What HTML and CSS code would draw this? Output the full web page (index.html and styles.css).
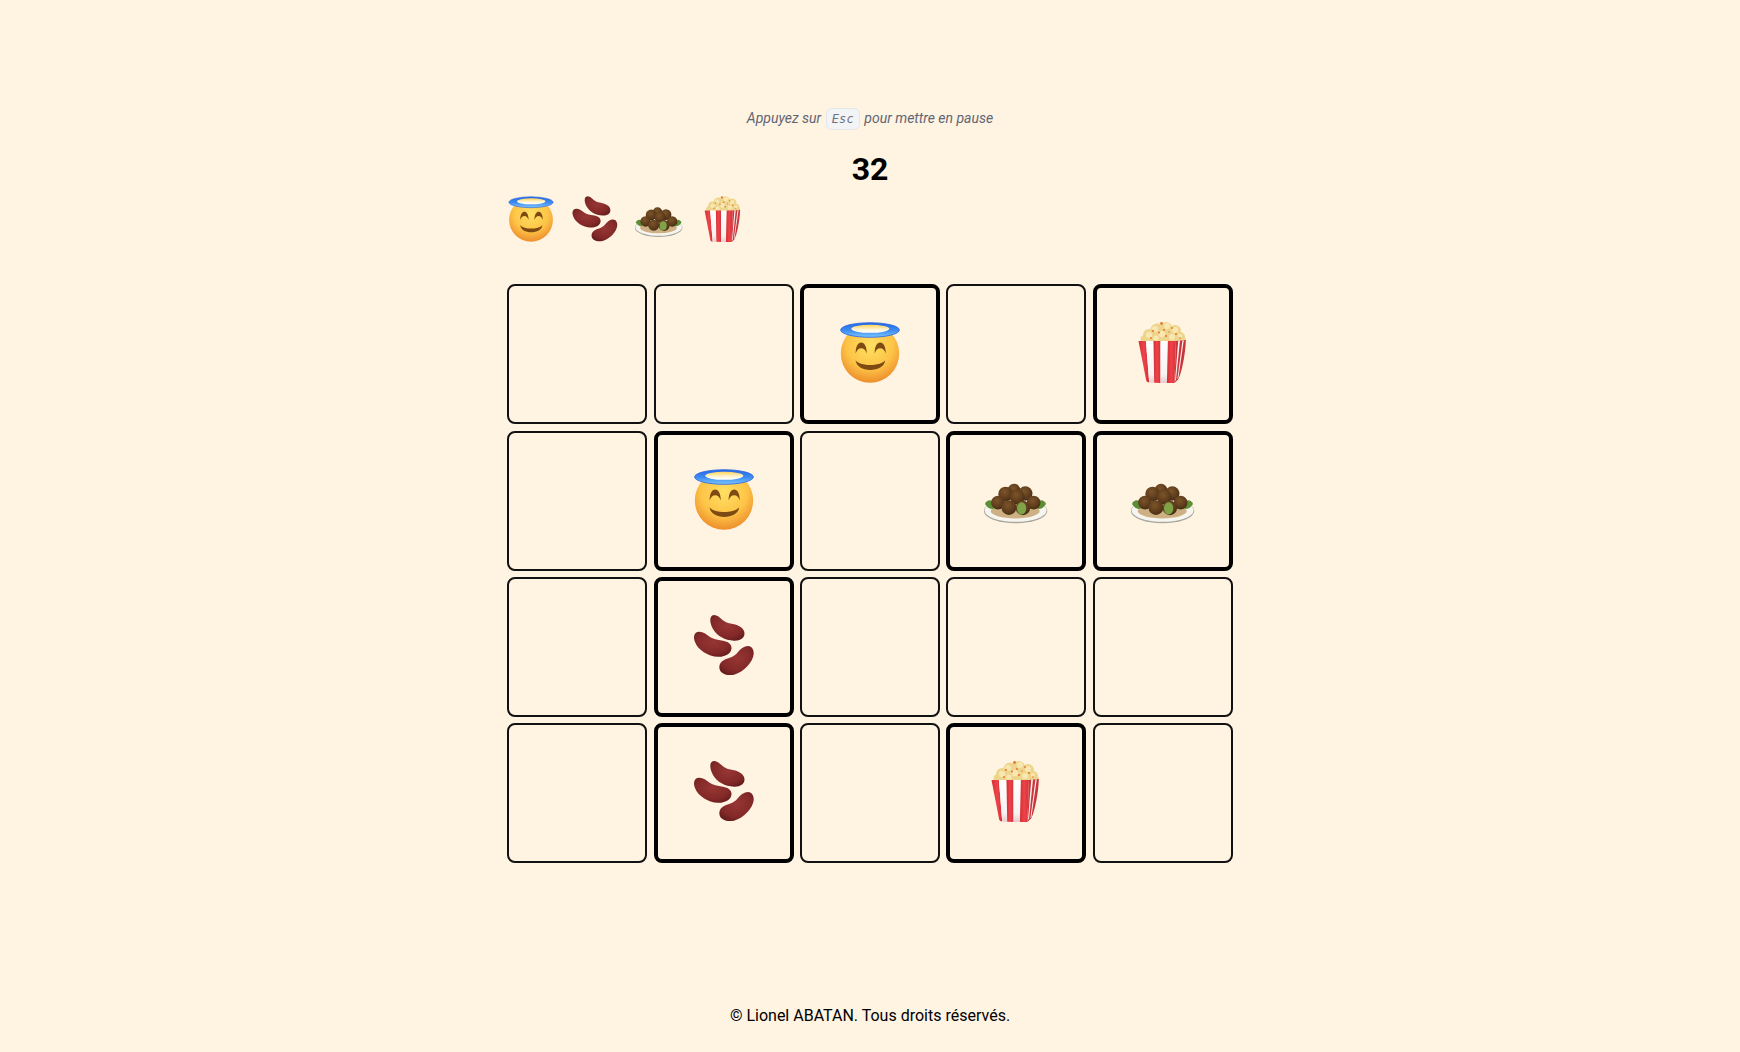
FILE: index.html
```html
<!DOCTYPE html>
<html lang="fr">
<head>
<meta charset="utf-8">
<title>Jeu de mémoire</title>
<link rel="stylesheet" href="styles.css">
</head>
<body>
<svg class="sprite" aria-hidden="true" xmlns="http://www.w3.org/2000/svg">
  <defs>
    <radialGradient id="face" cx="0.5" cy="0.36" r="0.66">
      <stop offset="0" stop-color="#ffdf62"/>
      <stop offset="0.6" stop-color="#fdc447"/>
      <stop offset="1" stop-color="#ec8a2a"/>
    </radialGradient>
    <linearGradient id="haloGrad" x1="0" y1="0" x2="0" y2="1">
      <stop offset="0" stop-color="#2467e6"/>
      <stop offset="0.55" stop-color="#3f8df2"/>
      <stop offset="1" stop-color="#7cc6fb"/>
    </linearGradient>
    <linearGradient id="haloIn" x1="0" y1="0" x2="0" y2="1">
      <stop offset="0" stop-color="#ffd35a"/>
      <stop offset="0.6" stop-color="#fff6d8"/>
      <stop offset="1" stop-color="#ffffff"/>
    </linearGradient>
    <radialGradient id="bean" cx="0.5" cy="0.4" r="0.65">
      <stop offset="0" stop-color="#973634"/>
      <stop offset="0.7" stop-color="#822928"/>
      <stop offset="1" stop-color="#641c1c"/>
    </radialGradient>
    <radialGradient id="ball" cx="0.42" cy="0.35" r="0.7">
      <stop offset="0" stop-color="#7d5429"/>
      <stop offset="0.7" stop-color="#5a3a1b"/>
      <stop offset="1" stop-color="#3d2610"/>
    </radialGradient>
    <linearGradient id="red" x1="0" y1="0" x2="1" y2="0">
      <stop offset="0" stop-color="#d62f36"/>
      <stop offset="0.5" stop-color="#ee4249"/>
      <stop offset="1" stop-color="#d3323a"/>
    </linearGradient>
    <linearGradient id="whiteStripe" x1="0" y1="0" x2="0" y2="1">
      <stop offset="0" stop-color="#ffffff"/>
      <stop offset="0.8" stop-color="#f7f2f0"/>
      <stop offset="1" stop-color="#e9c9cc"/>
    </linearGradient>
    <symbol id="halo" viewBox="0 0 64 64">
      <circle cx="32" cy="34.5" r="29.2" fill="url(#face)"/>
      <ellipse cx="32" cy="11" rx="29.4" ry="7.3" fill="url(#haloGrad)" stroke="#2a63e0" stroke-width="0.8"/>
      <ellipse cx="32.3" cy="9.8" rx="19" ry="4" fill="url(#haloIn)"/>
      <path d="M17.6 34.5C17.8 27 20 23.5 23.2 23.5C26.4 23.5 28.6 27 28.8 34.5C27.5 30.8 25.8 29.2 23.2 29.2C20.6 29.2 18.9 30.8 17.6 34.5Z" fill="#7c4a12"/>
      <path d="M36.6 34.5C36.8 27 39 23.5 42.2 23.5C45.4 23.5 47.6 27 47.8 34.5C46.5 30.8 44.8 29.2 42.2 29.2C39.6 29.2 37.9 30.8 36.6 34.5Z" fill="#7c4a12"/>
      <path d="M17.5 41.5C23 47.5 41.5 47.5 47.2 41.5C46.5 47.2 40 51 32.2 51C24.5 51 18.5 47.2 17.5 41.5Z" fill="#7c4a12"/>
    </symbol>
    <symbol id="beans" viewBox="0 0 64 64">
      <path d="M22 3C26 3 29 7 32 9C35 11 37 11 41 12C47 13.5 52.5 16 52.5 21.5C52.5 26 48 29 42 28.7C33 28.3 25 24 21 17C18 12 16.5 3.5 22 3Z" fill="url(#bean)"/>
      <path d="M7 19.7C11 19.5 14 22 18 25C21 27 25 28 31 28.7C36 29.5 39.5 32 39.5 36C39.5 41 34 45 26 44.8C16 44.5 6 38 3 30C1 25 2 20 7 19.7Z" fill="url(#bean)"/>
      <path d="M56 34C60 34 62 38 61.7 42C61 50 52 60 42 62.7C35 64 28 62 27.4 56C27 52 29.5 49 33 47.5C38 45.5 42 45 46 40C49 36.5 52 34 56 34Z" fill="url(#bean)"/>
    </symbol>
    <symbol id="falafel" viewBox="0 0 64 64">
      <ellipse cx="31.6" cy="45" rx="31.7" ry="12.2" fill="#a9a69c"/>
      <ellipse cx="31.6" cy="44.2" rx="31" ry="11.6" fill="#f7f5ef"/>
      <ellipse cx="31.2" cy="45" rx="24.5" ry="7.4" fill="#cdb083"/>
      <path d="M1 38C3 33 8 33 11 38L9 43C5 43 3 41 1 38Z" fill="#5c8f35"/>
      <path d="M62 38C60 33 55 33 52 38L54 43C58 43 60 41 62 38Z" fill="#5c8f35"/>
      <circle cx="30" cy="24.2" r="6.4" fill="url(#ball)"/>
      <circle cx="41.3" cy="27.5" r="7.2" fill="url(#ball)"/>
      <circle cx="21.6" cy="28" r="7.3" fill="url(#ball)"/>
      <circle cx="14" cy="36.6" r="6.9" fill="url(#ball)"/>
      <circle cx="49.6" cy="36.6" r="6.9" fill="url(#ball)"/>
      <circle cx="33.3" cy="31" r="7.4" fill="url(#ball)"/>
      <circle cx="24.9" cy="41.6" r="7.4" fill="url(#ball)"/>
      <circle cx="38.9" cy="42" r="7.2" fill="url(#ball)"/>
      <ellipse cx="37.6" cy="42.4" rx="4.6" ry="6.2" fill="#7fa347"/>
    </symbol>
    <symbol id="popcorn" viewBox="0 0 64 64">
      <g fill="#eed58c">
        <circle cx="18" cy="16" r="6"/><circle cx="26" cy="11" r="6.5"/><circle cx="35" cy="9" r="6"/><circle cx="44" cy="12" r="6"/><circle cx="49" cy="18" r="5"/><circle cx="13" cy="20" r="3.5"/><circle cx="30" cy="18" r="7"/><circle cx="40" cy="18" r="7"/><circle cx="22" cy="19" r="6"/><circle cx="52" cy="21" r="3"/>
      </g>
      <g fill="#f8e7b2">
        <circle cx="24" cy="10" r="3"/><circle cx="36" cy="7" r="3"/><circle cx="44" cy="11" r="3"/><circle cx="18" cy="16" r="3"/><circle cx="31" cy="15" r="3.2"/><circle cx="41" cy="18" r="3"/><circle cx="25" cy="19" r="2.6"/><circle cx="49" cy="17" r="2"/>
      </g>
      <g fill="#e4762f">
        <circle cx="30.5" cy="4.5" r="1.4"/><circle cx="22" cy="12" r="1.1"/><circle cx="33" cy="11" r="1"/><circle cx="41" cy="9" r="0.9"/><circle cx="28" cy="13.5" r="1"/><circle cx="35" cy="17" r="1.1"/><circle cx="45" cy="15" r="1"/><circle cx="20" cy="19" r="0.9"/><circle cx="49" cy="19" r="0.8"/><circle cx="38" cy="13" r="0.7"/>
      </g>
      <path d="M44.9 22L54.8 21C54.6 34 50.5 55 47 60.5L43.5 64Z" fill="#c8363c"/>
      <path d="M47.2 21.8L49 21.6L45 61L44 62ZM51.4 21.4L52.8 21.2L47.4 59L46.4 60Z" fill="#f9ecea"/>
      <path d="M7.5 22H14.9L18.2 63.5C16.5 63.3 15.5 62.8 15.2 61.5Z" fill="url(#red)"/>
      <path d="M14.9 22H22.5L23.2 63.8L18.2 63.5Z" fill="url(#whiteStripe)"/>
      <path d="M22.5 22H29.5L29.5 64L23.2 63.8Z" fill="url(#red)"/>
      <path d="M29.5 22H36.9L35.9 64L29.5 64Z" fill="url(#whiteStripe)"/>
      <path d="M36.9 22H44.9L43.5 64H35.9Z" fill="url(#red)"/>
    </symbol>
  </defs>
</svg>

<main class="game">
  <p class="hint">Appuyez sur <kbd class="key">Esc</kbd> pour mettre en pause</p>
  <h1 class="score">32</h1>
  <div class="targets">
    <svg class="emoji-small"><use href="#halo"/></svg>
    <svg class="emoji-small"><use href="#beans"/></svg>
    <svg class="emoji-small"><use href="#falafel"/></svg>
    <svg class="emoji-small"><use href="#popcorn"/></svg>
  </div>
  <div class="board">
    <div class="cell"></div>
    <div class="cell"></div>
    <div class="cell found"><svg class="emoji"><use href="#halo"/></svg></div>
    <div class="cell"></div>
    <div class="cell found"><svg class="emoji"><use href="#popcorn"/></svg></div>

    <div class="cell"></div>
    <div class="cell found"><svg class="emoji"><use href="#halo"/></svg></div>
    <div class="cell"></div>
    <div class="cell found"><svg class="emoji"><use href="#falafel"/></svg></div>
    <div class="cell found"><svg class="emoji"><use href="#falafel"/></svg></div>

    <div class="cell"></div>
    <div class="cell found"><svg class="emoji"><use href="#beans"/></svg></div>
    <div class="cell"></div>
    <div class="cell"></div>
    <div class="cell"></div>

    <div class="cell"></div>
    <div class="cell found"><svg class="emoji"><use href="#beans"/></svg></div>
    <div class="cell"></div>
    <div class="cell found"><svg class="emoji"><use href="#popcorn"/></svg></div>
    <div class="cell"></div>
  </div>
</main>
<footer class="footer">© Lionel ABATAN. Tous droits réservés.</footer>
</body>
</html>
```

FILE: styles.css
```css
* {
  box-sizing: border-box;
}

html,
body {
  margin: 0;
  height: 100%;
}

body {
  display: flex;
  flex-direction: column;
  min-height: 100vh;
  background: #fff3e2;
  color: #000;
  font-family: Roboto, "Liberation Sans", sans-serif;
}

.sprite {
  position: absolute;
  width: 0;
  height: 0;
  overflow: hidden;
}

.game {
  display: flex;
  flex-direction: column;
  width: 726px;
  margin: 0 auto;
  padding-top: 106px;
}

.hint {
  margin: 0;
  height: 24px;
  font-size: 14px;
  line-height: 24px;
  font-style: italic;
  color: #5f6673;
  text-align: center;
}

.key {
  display: inline-block;
  height: 22px;
  padding: 0 5px;
  margin: 0 1px;
  font-family: "DejaVu Sans Mono", monospace;
  font-size: 12px;
  font-style: italic;
  line-height: 20px;
  letter-spacing: 0.2px;
  color: #6b7280;
  background: #f3f4f6;
  border: 1px solid #e5e7eb;
  border-radius: 6px;
  vertical-align: middle;
}

.score {
  margin: 20px 0 0;
  height: 40px;
  font-size: 32px;
  line-height: 39px;
  font-weight: 700;
  text-align: center;
}

.targets {
  display: flex;
  gap: 16px;
  margin-top: 4px;
  height: 48px;
}

.emoji-small {
  display: block;
  width: 48px;
  height: 48px;
}

.board {
  display: grid;
  grid-template-columns: repeat(5, 140px);
  grid-auto-rows: 140px;
  gap: 6.4px;
  justify-content: center;
  margin-top: 42.2px;
}

.cell {
  display: flex;
  align-items: center;
  justify-content: center;
  border: 2px solid #111;
  border-radius: 8px;
}

.cell.found {
  border: 4px solid #000;
}

.emoji {
  display: block;
  width: 64px;
  height: 64px;
  margin-bottom: 6px;
}

.footer {
  margin-top: auto;
  padding-bottom: 24px;
  font-size: 16px;
  line-height: 24px;
  text-align: center;
}
```
